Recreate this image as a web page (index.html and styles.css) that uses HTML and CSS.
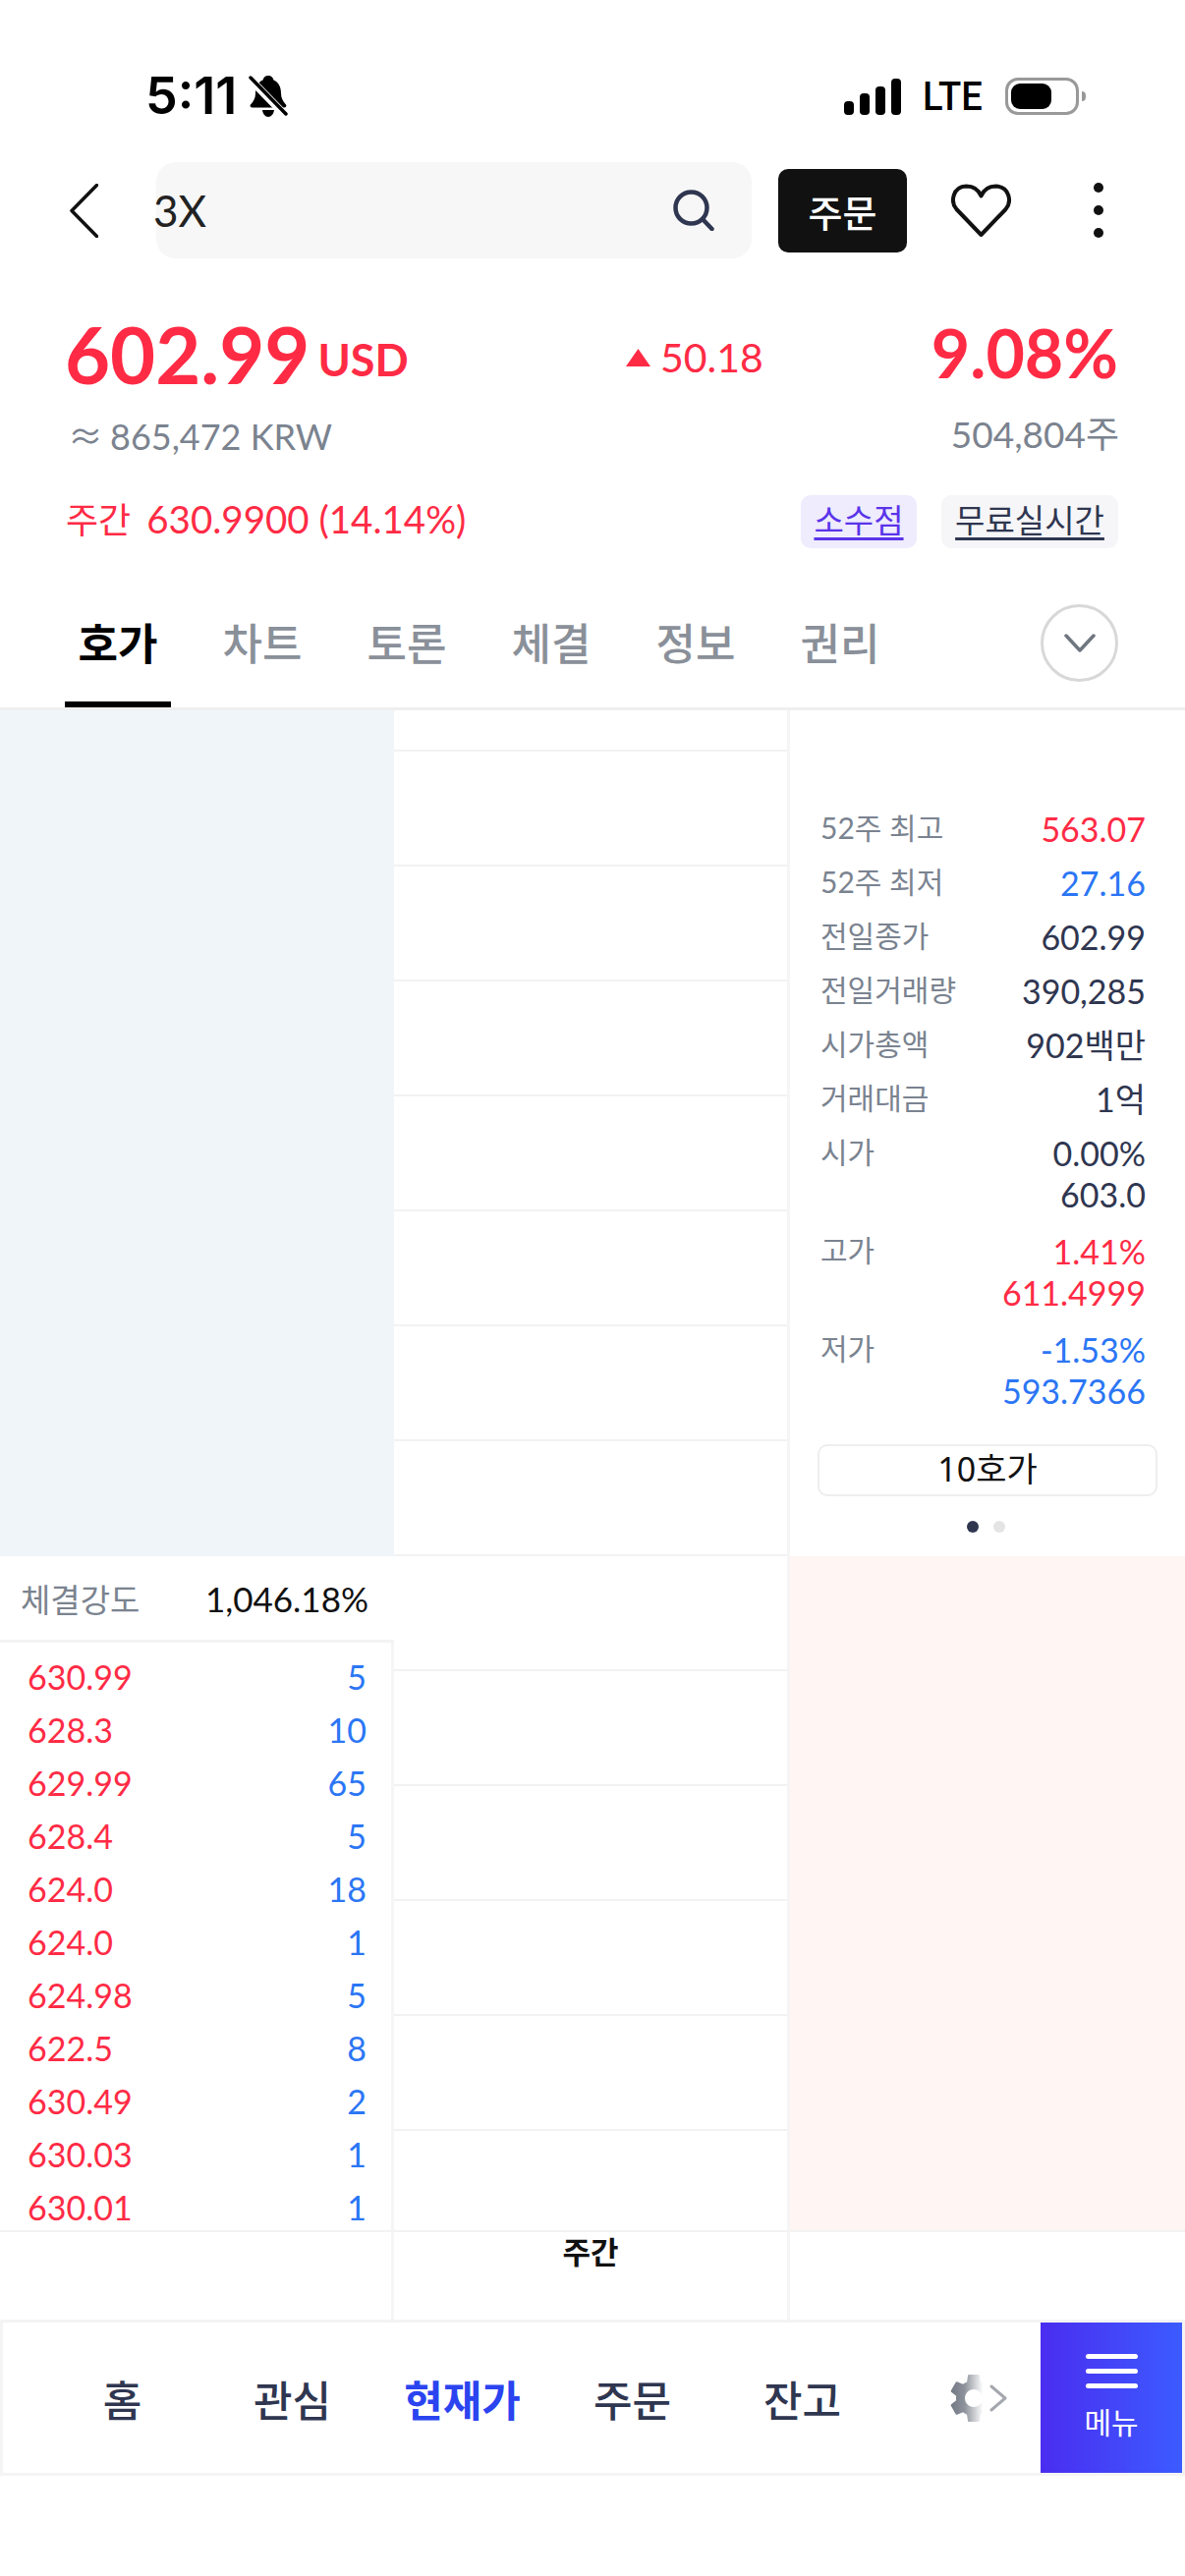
FILE: index.html
```html
<!DOCTYPE html>
<html lang="ko">
<head>
  <meta charset="UTF-8">
  <title>3X 호가</title>
  <link rel="stylesheet" href="styles.css">
</head>
<body>

  <!-- Status bar -->
  <div class="status">
    <div class="status-left">
      <span class="clock">5:11</span>
      <svg class="bell" width="40" height="42" viewBox="0 0 40 42">
        <path d="M20 0c3 0 5 2 5.500 4.500C31 7 33 12 33 18c0 5 2 8 5 11.500 1 1.500 0 3-2 3H4c-2 0-3-1.500-2-3C5 26 7 23 7 18 7 12 9 7 14.500 4.500 15 2 17 0 20 0zM14 35h12c-.5 4-3 7-6 7s-5.500-3-6-7z" fill="#000"/>
        <path d="M1 3l36 37" stroke="#fff" stroke-width="8"/>
        <path d="M2 2l36 37" stroke="#000" stroke-width="3.500" stroke-linecap="round"/>
      </svg>
    </div>
    <div class="status-right">
      <div class="signal">
        <i class="bar-1"></i><i class="bar-2"></i><i class="bar-3"></i><i class="bar-4"></i>
      </div>
      <span class="lte">LTE</span>
      <div class="battery"><div class="battery-fill"></div></div>
      <div class="battery-nub"></div>
    </div>
  </div>

  <!-- Search row -->
  <div class="topbar">
    <svg class="back" width="29" height="55" viewBox="0 0 29 55">
      <path d="M27.500 1.500L2 27.500l25.500 26" fill="none" stroke="#111" stroke-width="3.500" stroke-linecap="round" stroke-linejoin="round"/>
    </svg>
    <div class="search">
      <span class="search-text">3X</span>
      <svg width="42" height="42" viewBox="0 0 42 42">
        <circle cx="18.500" cy="18.500" r="16" fill="none" stroke="#2f3650" stroke-width="4.500"/>
        <path d="M30 30l9.500 10" stroke="#2f3650" stroke-width="4.500" stroke-linecap="round"/>
      </svg>
    </div>
    <button class="order">주문</button>
    <svg class="heart" width="61" height="54" viewBox="0 0 61 54">
      <path d="M30.500 52L5.500 26C-1 18.500 1.500 3 15.500 2.500c7 0 12.500 4 15 10 2.500-6 8-10 15-10C59.500 3 62 18.500 55.500 26z" fill="none" stroke="#111" stroke-width="4" stroke-linejoin="round"/>
    </svg>
    <div class="more"><i></i><i></i><i></i></div>
  </div>

  <!-- Price -->
  <div class="quote">
    <div class="quote-main">
      <div class="price-group">
        <span class="price">602.99</span>
        <span class="currency">USD</span>
      </div>
      <div class="change">
        <svg width="25" height="18" viewBox="0 0 25 18"><path d="M12.500 0L25 18H0z" fill="#ff2b45"/></svg>
        <span>50.18</span>
      </div>
      <div class="rate">9.08%</div>
    </div>
    <div class="quote-sub">
      <span class="krw"><span class="approx">≈</span>865,472 KRW</span>
      <span>504,804주</span>
    </div>
    <div class="quote-extra">
      <span class="weekly"><span class="weekly-label">주간</span>630.9900 (14.14%)</span>
      <div class="tags">
        <a class="tag tag-purple">소수점</a>
        <a class="tag tag-gray">무료실시간</a>
      </div>
    </div>
  </div>

  <!-- Tabs -->
  <div class="tabs">
    <div class="tab active">호가</div>
    <div class="tab">차트</div>
    <div class="tab">토론</div>
    <div class="tab">체결</div>
    <div class="tab">정보</div>
    <div class="tab">권리</div>
    <div class="tab-more">
      <svg width="32" height="19" viewBox="0 0 32 19">
        <path d="M2 2l14 15L30 2" fill="none" stroke="#6f7680" stroke-width="3.500" stroke-linecap="round" stroke-linejoin="round"/>
      </svg>
    </div>
  </div>

  <!-- Order book -->
  <div class="book">
    <div class="col-left">
      <div class="ask-fill"></div>
      <div class="strength">
        <span class="strength-label">체결강도</span>
        <span class="strength-value">1,046.18%</span>
      </div>
      <div class="trades">
        <div class="trade"><span>630.99</span><span class="qty">5</span></div>
        <div class="trade"><span>628.3</span><span class="qty">10</span></div>
        <div class="trade"><span>629.99</span><span class="qty">65</span></div>
        <div class="trade"><span>628.4</span><span class="qty">5</span></div>
        <div class="trade"><span>624.0</span><span class="qty">18</span></div>
        <div class="trade"><span>624.0</span><span class="qty">1</span></div>
        <div class="trade"><span>624.98</span><span class="qty">5</span></div>
        <div class="trade"><span>622.5</span><span class="qty">8</span></div>
        <div class="trade"><span>630.49</span><span class="qty">2</span></div>
        <div class="trade"><span>630.03</span><span class="qty">1</span></div>
        <div class="trade"><span>630.01</span><span class="qty">1</span></div>
      </div>
    </div>

    <div class="col-mid">
      <div class="level level-first"></div>
      <div class="level"></div><div class="level"></div><div class="level"></div><div class="level"></div>
      <div class="level"></div><div class="level"></div><div class="level"></div>
      <div class="level"></div><div class="level"></div><div class="level"></div><div class="level"></div>
      <div class="level"></div>
      <div class="level level-last"></div>
    </div>

    <div class="col-right">
      <div class="info">
        <div class="info-rows">
          <div class="info-row"><span class="info-label">52주 최고</span><span class="up">563.07</span></div>
          <div class="info-row"><span class="info-label">52주 최저</span><span class="down">27.16</span></div>
          <div class="info-row"><span class="info-label">전일종가</span><span>602.99</span></div>
          <div class="info-row"><span class="info-label">전일거래량</span><span>390,285</span></div>
          <div class="info-row"><span class="info-label">시가총액</span><span>902백만</span></div>
          <div class="info-row"><span class="info-label">거래대금</span><span>1억</span></div>
          <div class="info-row"><span class="info-label">시가</span><span class="info-stack">0.00%<br>603.0</span></div>
          <div class="info-row info-row-gap"><span class="info-label">고가</span><span class="info-stack up">1.41%<br>611.4999</span></div>
          <div class="info-row info-row-gap"><span class="info-label">저가</span><span class="info-stack down">-1.53%<br>593.7366</span></div>
        </div>
        <div class="depth-btn">10호가</div>
        <div class="pager"><i class="on"></i><i></i></div>
      </div>
      <div class="bid-fill"></div>
    </div>

    <div class="foot-cell foot-start"></div>
    <div class="foot-cell foot-mid">주간</div>
    <div class="foot-cell"></div>
  </div>

  <!-- Bottom navigation -->
  <div class="nav">
    <div class="nav-items">
      <div class="nav-item">홈</div>
      <div class="nav-item">관심</div>
      <div class="nav-item current">현재가</div>
      <div class="nav-item">주문</div>
      <div class="nav-item">잔고</div>
      <div class="nav-set">
        <svg width="60" height="60" viewBox="0 0 24 24">
          <defs>
            <linearGradient id="gear-fade" x1="0" y1="0" x2="1" y2="0">
              <stop offset="0" stop-color="#737985"/>
              <stop offset="0.3" stop-color="#8d929b"/>
              <stop offset="0.7" stop-color="#ffffff"/>
            </linearGradient>
          </defs>
          <path fill="url(#gear-fade)" fill-rule="evenodd" d="M19.140 12.940c.04-.3.06-.61.06-.94 0-.32-.02-.64-.07-.94l2.030-1.580c.18-.14.23-.41.12-.61l-1.920-3.320c-.12-.22-.37-.29-.59-.22l-2.390.96c-.5-.38-1.030-.7-1.620-.94l-.36-2.540c-.04-.24-.24-.41-.48-.41h-3.840c-.24 0-.43.17-.47.41l-.36 2.540c-.59.24-1.130.57-1.620.94l-2.390-.96c-.22-.08-.47 0-.59.22L2.740 8.870c-.12.21-.08.47.12.61l2.030 1.580c-.05.3-.09.63-.09.94s.02.64.07.94l-2.030 1.580c-.18.14-.23.41-.12.61l1.920 3.320c.12.22.37.29.59.22l2.390-.96c.5.38 1.030.7 1.620.94l.36 2.540c.05.24.24.41.48.41h3.840c.24 0 .44-.17.47-.41l.36-2.540c.59-.24 1.130-.56 1.620-.94l2.390.96c.22.08.47 0 .59-.22l1.920-3.320c.12-.22.07-.47-.12-.61l-2.010-1.580zM12 15.600c-1.980 0-3.600-1.620-3.600-3.600s1.620-3.600 3.600-3.600 3.600 1.620 3.600 3.600-1.620 3.600-3.600 3.600z"/>
        </svg>
        <svg class="nav-chevron" width="18" height="28" viewBox="0 0 18 28">
          <path d="M2 2l14 12L2 26" fill="none" stroke="#a4a8ad" stroke-width="3" stroke-linecap="round" stroke-linejoin="round"/>
        </svg>
      </div>
    </div>
    <div class="nav-menu">
      <div class="menu-icon"><i></i><i></i><i></i></div>
      <span>메뉴</span>
    </div>
  </div>

</body>
</html>
```

FILE: styles.css
```css
* {
  box-sizing: border-box;
}
body {
  margin: 0;
  background: #fff;
  font-family: Lato, "Noto Sans CJK KR", sans-serif;
  color: #2f3650;
}

/* Status bar */
.status {
  height: 165px;
  display: flex;
  justify-content: space-between;
  align-items: flex-start;
  padding: 74px 101px 0 148px;
}
.status-left,
.status-right {
  display: flex;
  align-items: center;
}
.clock {
  font-family: Inter, sans-serif;
  font-weight: 600;
  font-size: 52px;
  line-height: 48px;
  color: #000;
}
.bell {
  margin-left: 12px;
}
.signal {
  display: flex;
  align-items: flex-end;
  gap: 6px;
  height: 37px;
  margin-left: -2px;
}
.signal i {
  display: block;
  width: 10px;
  background: #000;
  border-radius: 4px;
}
.bar-1 { height: 14px; }
.bar-2 { height: 22px; }
.bar-3 { height: 29px; }
.bar-4 { height: 37px; }
.lte {
  font-family: Roboto, sans-serif;
  font-weight: 500;
  font-size: 41px;
  line-height: 48px;
  color: #000;
  margin: 0 22px 0 22px;
  width: 62px;
  transform: scaleX(0.93);
  transform-origin: left center;
}
.battery {
  width: 75px;
  height: 38px;
  border: 3px solid #999;
  border-radius: 13px;
  padding: 3px;
}
.battery-fill {
  width: 41px;
  height: 26px;
  background: #000;
  border-radius: 9px;
}
.battery-nub {
  width: 4px;
  height: 10px;
  margin-left: 3px;
  background: #999;
  border-radius: 0 4px 4px 0;
}

/* Search row */
.topbar {
  display: flex;
  align-items: center;
  height: 98px;
  padding-left: 71px;
}
.back {
  margin-right: 59px;
}
.search {
  width: 606px;
  height: 98px;
  background: #f7f7f7;
  border-radius: 20px;
  display: flex;
  align-items: center;
  justify-content: space-between;
  padding-right: 38px;
}
.search-text {
  font-size: 44px;
  color: #222;
  margin-left: -3px;
}
.order {
  width: 131px;
  height: 85px;
  margin-left: 27px;
  background: #111;
  color: #fff;
  border: none;
  border-radius: 10px;
  font-family: inherit;
  font-size: 38px;
  font-weight: 500;
  padding: 0;
}
.heart {
  margin-left: 45px;
}
.more {
  margin-left: 84px;
  display: flex;
  flex-direction: column;
  gap: 13px;
}
.more i {
  display: block;
  width: 10px;
  height: 10px;
  background: #111;
  border-radius: 50%;
}

/* Price */
.quote {
  padding: 39px 68px 0 67px;
}
.quote-main {
  display: grid;
  grid-template-columns: 570px 1fr auto;
  align-items: center;
  height: 117px;
  color: #ff2b45;
}
.price-group {
  display: flex;
  align-items: center;
  gap: 8px;
  margin-left: -1px;
}
.price {
  font-size: 79.500px;
  font-weight: 700;
  line-height: 100px;
}
.currency {
  font-size: 45px;
  font-weight: 700;
  margin-top: 10px;
}
.change {
  display: flex;
  align-items: center;
  gap: 10px;
  font-size: 41px;
  margin-top: 6px;
}
.rate {
  font-size: 68px;
  font-weight: 700;
  line-height: 80px;
  margin-top: -4px;
}
.quote-sub {
  display: flex;
  justify-content: space-between;
  height: 46px;
  font-size: 37px;
  line-height: 46px;
  color: #7b838f;
  margin-right: -1px;
}
.krw {
  font-size: 36px;
  margin-left: 2px;
}
.approx {
  font-family: "Noto Sans CJK KR", sans-serif;
  margin-right: 7px;
}
.quote-extra {
  display: flex;
  justify-content: space-between;
  align-items: center;
  height: 54px;
  margin-top: 39px;
}
.weekly {
  font-size: 38.500px;
  color: #ff2b45;
  margin-top: -8px;
}
.weekly-label {
  font-size: 36px;
  margin-right: 16px;
}
.tags {
  display: flex;
  gap: 25px;
}
.tag {
  display: block;
  height: 54px;
  line-height: 50px;
  border-radius: 10px;
  text-decoration: underline;
  text-underline-offset: 5px;
  font-size: 33px;
}
.tag-purple {
  width: 118px;
  text-align: center;
  background: #eeecfd;
  color: #5a34ea;
}
.tag-gray {
  width: 180px;
  text-align: center;
  background: #f6f6f8;
  color: #2f3650;
}

/* Tabs */
.tabs {
  display: flex;
  align-items: flex-end;
  height: 165px;
  padding: 0 68px 0 66px;
  gap: 39px;
  border-bottom: 3px solid #efefef;
}
.tab {
  width: 108px;
  height: 95px;
  text-align: center;
  font-size: 44px;
  line-height: 60px;
  font-weight: 500;
  color: #8a9099;
  border-bottom: 6px solid transparent;
}
.tab.active {
  font-weight: 700;
  color: #000;
  border-bottom-color: #000;
}
.tab-more {
  width: 79px;
  height: 79px;
  margin-left: auto;
  margin-bottom: 26px;
  border: 3px solid #d8d8d8;
  border-radius: 50%;
  display: flex;
  align-items: center;
  justify-content: center;
}

/* Order book */
.book {
  display: grid;
  grid-template-columns: 401px 403px 402px;
  grid-template-rows: 1547px 91px;
}
.col-left {
  display: flex;
  flex-direction: column;
  min-height: 0;
}
.ask-fill {
  flex: none;
  height: 861px;
  background: #eff5f9;
}
.strength {
  flex: none;
  height: 88px;
  display: flex;
  justify-content: space-between;
  align-items: center;
  padding: 0 26px 0 21px;
  border-bottom: 3px solid #f3f3f3;
}
.strength-label {
  font-size: 33px;
  color: #7b838f;
}
.strength-value {
  font-size: 35px;
  color: #111;
}
.trades {
  flex: 1 1 0;
  min-height: 0;
  padding: 8px 25px 0 28px;
  border-right: 3px solid #f5f5f5;
}
.trade {
  display: flex;
  justify-content: space-between;
  height: 54px;
  line-height: 54px;
  font-size: 34px;
  color: #ff2b45;
}
.qty {
  color: #2b76f5;
}
.col-mid {
  display: flex;
  flex-direction: column;
  border-right: 3px solid #f5f5f5;
}
.level {
  height: 117px;
  border-bottom: 2px solid #f2f2f2;
}
.level-first {
  height: 42px;
}
.level-last {
  flex: 1;
  height: auto;
  border-bottom: none;
}
.col-right {
  display: flex;
  flex-direction: column;
}
.info {
  height: 861px;
  padding: 100px 0 0 31px;
  font-size: 34px;
  line-height: 42px;
}
.info-rows {
  display: flex;
  flex-direction: column;
  gap: 13px;
  padding-right: 40px;
}
.info-row {
  display: flex;
  justify-content: space-between;
  align-items: flex-start;
}
.info-row-gap {
  margin-top: 3px;
}
.info-label {
  font-size: 30px;
  line-height: 38px;
  color: #7a8390;
}
.info-stack {
  text-align: right;
}
.up {
  color: #ff2b45;
}
.down {
  color: #2b76f5;
}
.depth-btn {
  width: 346px;
  height: 53px;
  margin: 33px 0 0 -3px;
  border: 2px solid #eee;
  border-radius: 10px;
  text-align: center;
  font-family: "Noto Sans", "Noto Sans CJK KR", sans-serif;
  font-size: 34px;
  line-height: 46px;
  color: #111;
}
.pager {
  display: flex;
  justify-content: center;
  gap: 15px;
  margin: 25px 34px 0 0;
}
.pager i {
  display: block;
  width: 12px;
  height: 12px;
  border-radius: 50%;
  background: #e4e4e4;
}
.pager i.on {
  background: #2f3650;
}
.bid-fill {
  flex: 1;
  background: #fff6f4;
}
.foot-cell {
  border-top: 2px solid #f2f2f2;
}
.foot-start {
  border-right: 3px solid #f5f5f5;
}
.foot-mid {
  border-right: 3px solid #f5f5f5;
  text-align: center;
  font-size: 31px;
  font-weight: 700;
  line-height: 40px;
  color: #111;
}

/* Bottom navigation */
.nav {
  display: flex;
  height: 159px;
  padding: 3px 3px;
  background: #f4f4f4;
}
.nav-items {
  flex: 1;
  display: flex;
  align-items: center;
  padding-left: 35px;
  background: #fff;
}
.nav-item {
  width: 173px;
  text-align: center;
  font-size: 43px;
  font-weight: 500;
  color: #2f3650;
}
.nav-item.current {
  font-weight: 700;
  color: #2b44f0;
}
.nav-set {
  display: flex;
  align-items: center;
  margin-left: 58px;
}
.nav-chevron {
  margin-left: -14px;
}
.nav-menu {
  width: 144px;
  background: linear-gradient(90deg, #4a2df0, #3c5bff);
  color: #fff;
  display: flex;
  flex-direction: column;
  align-items: center;
  padding-top: 32px;
  font-size: 30px;
  line-height: 40px;
}
.menu-icon {
  display: flex;
  flex-direction: column;
  gap: 10px;
  margin-bottom: 14px;
}
.menu-icon i {
  display: block;
  width: 53px;
  height: 5px;
  background: #fff;
  border-radius: 3px;
}
```
